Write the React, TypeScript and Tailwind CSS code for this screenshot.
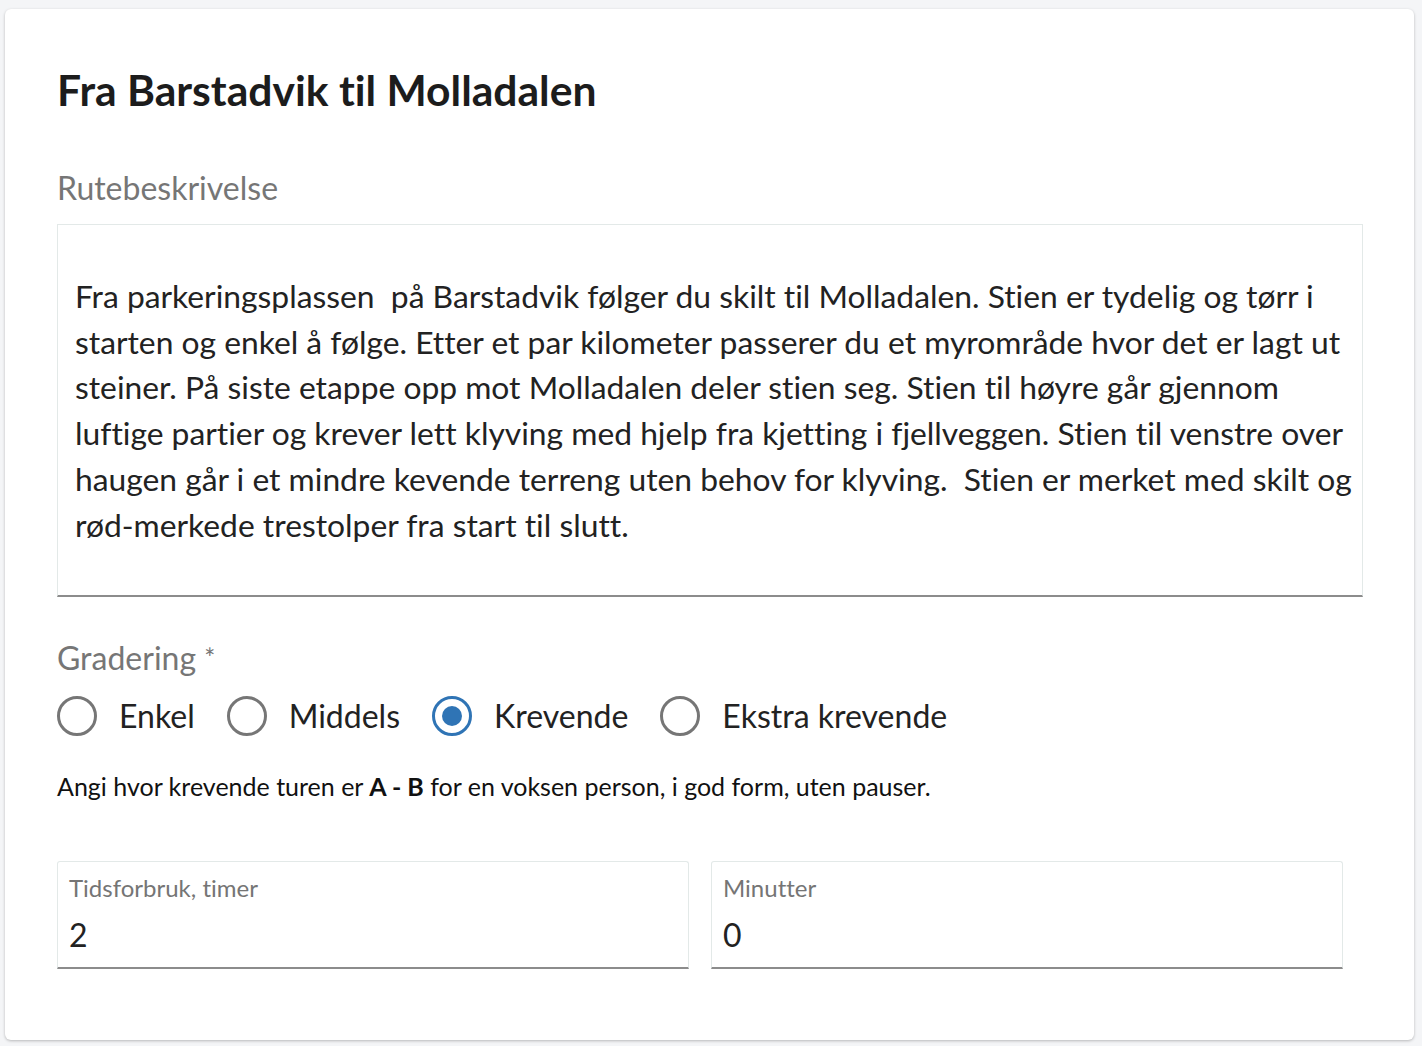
import { useState } from 'react';

const options = ['Enkel', 'Middels', 'Krevende', 'Ekstra krevende'];

const description =
    'Fra parkeringsplassen  på Barstadvik følger du skilt til Molladalen. Stien er tydelig og tørr i starten og enkel å følge. Etter et par kilometer passerer du et myrområde hvor det er lagt ut steiner. På siste etappe opp mot Molladalen deler stien seg. Stien til høyre går gjennom luftige partier og krever lett klyving med hjelp fra kjetting i fjellveggen. Stien til venstre over haugen går i et mindre kevende terreng uten behov for klyving.  Stien er merket med skilt og rød-merkede trestolper fra start til slutt.';

function Radio({ label, checked, onClick }: { label: string; checked: boolean; onClick: () => void }) {
    return (
        <button type="button" onClick={onClick} className="flex items-center gap-[22px] mr-[32px]">
            <span
                className={
                    'w-[40px] h-[40px] rounded-full border-[3px] flex items-center justify-center ' +
                    (checked ? 'border-[#2f74b5]' : 'border-[#767676]')
                }
            >
                {checked && <span className="w-[20px] h-[20px] rounded-full bg-[#2f74b5]"></span>}
            </span>
            <span className="text-[32px] text-[#222] leading-[40px]">{label}</span>
        </button>
    );
}

function Field({ label, value }: { label: string; value: string }) {
    return (
        <div className="flex-1 border border-[#e3e9e8] border-b-2 border-b-[#8c8c8c] rounded-t-[3px] px-[11px] pt-[11px] pb-[12px]">
            <div className="text-[24px] text-[#757575] leading-[30px]">{label}</div>
            <div className="text-[32px] text-[#222] leading-[40px] mt-[12px]">{value}</div>
        </div>
    );
}

export default function App() {
    const [grade, setGrade] = useState('Krevende');

    return (
        <div
            className="min-h-screen bg-[#f4f5f7] pt-[9px] pl-[5px] pr-[8px] pb-[6px] [font-variant-ligatures:none]"
            style={{ fontFamily: 'Lato, "Noto Sans", sans-serif' }}
        >
            <div className="bg-white rounded-[6px] shadow-[0_1px_3px_rgba(0,0,0,0.25)] pl-[52px] pr-[51px] pt-[56px] pb-[71px]">
                <h1 className="text-[42.6px] font-bold text-[#1c1c1c] leading-[50px]">Fra Barstadvik til Molladalen</h1>

                <div className="mt-[53px] text-[32px] text-[#767676] leading-[40px]">Rutebeskrivelse</div>
                <div className="mt-[16px] border border-[#e3e9e8] border-b-2 border-b-[#8c8c8c] pl-[17px] pr-[10px] pt-[49px] pb-[47px]">
                    <p className="text-[31.8px] text-[#222] leading-[45.7px] whitespace-pre-wrap">{description}</p>
                </div>

                <div className="mt-[41px] text-[32px] text-[#767676] leading-[40px]">
                    Gradering <span className="text-[26px] align-top">*</span>
                </div>
                <div className="mt-[18px] flex items-center">
                    {options.map(o => (
                        <Radio key={o} label={o} checked={grade === o} onClick={() => setGrade(o)} />
                    ))}
                </div>

                <p className="mt-[35px] text-[25px] text-[#111] leading-[30px]">
                    Angi hvor krevende turen er <b>A - B</b> for en voksen person, i god form, uten pauser.
                </p>

                <div className="mt-[60px] flex gap-[22px] pr-[20px]">
                    <Field label="Tidsforbruk, timer" value="2" />
                    <Field label="Minutter" value="0" />
                </div>
            </div>
        </div>
    );
}
